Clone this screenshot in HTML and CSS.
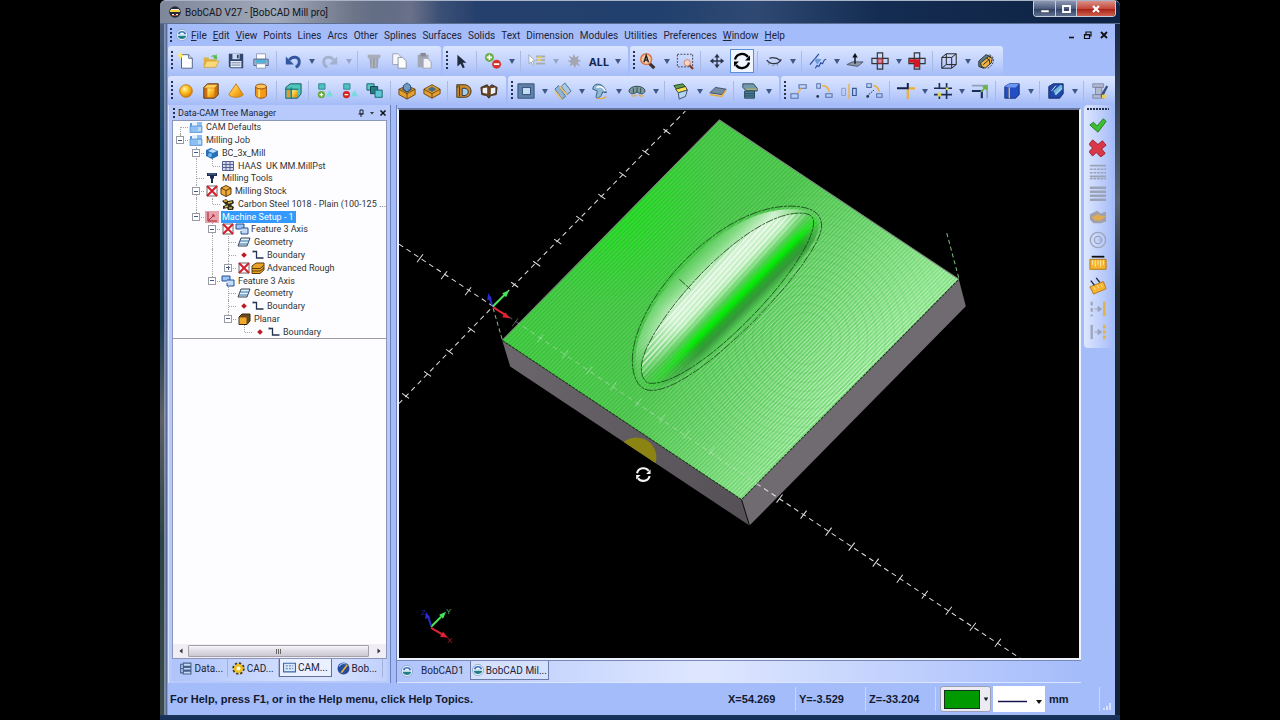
FILE: index.html
```html
<!DOCTYPE html>
<html lang="en">
<head>
    <meta charset="UTF-8">
    <meta name="viewport" content="width=device-width, initial-scale=1.0">
    <title>BobCAD V27 - [BobCAD Mill pro]</title>
    <link rel="stylesheet" href="styles.css">
</head>
<body>
    <!-- Shared icons -->
    <svg class="sprite" aria-hidden="true">
        <defs>
            <linearGradient id="gold" x1="0" y1="0" x2="1" y2="1">
                <stop offset="0" stop-color="#fff08a"/><stop offset="0.5" stop-color="#fdb92c"/><stop offset="1" stop-color="#d77d08"/>
            </linearGradient>
            <radialGradient id="ball" cx="0.4" cy="0.35" r="0.7">
                <stop offset="0" stop-color="#fff6a0"/><stop offset="0.5" stop-color="#fbb81f"/><stop offset="1" stop-color="#cf7604"/>
            </radialGradient>
        </defs>
        <symbol id="i-app" viewBox="0 0 14 14">
            <circle cx="7" cy="7" r="6.5" fill="#eef4ff" stroke="#8ba5c9"/>
            <path d="M2 6a5.200 5.200 0 0 1 10 0z" fill="#3b77c0"/>
            <path d="M2 8a5.200 5.200 0 0 0 10 0z" fill="#1f7f8a"/>
            <path d="M4.500 6a2.500 2 0 0 1 5 0z" fill="#fff"/>
        </symbol>
        <symbol id="i-folder" viewBox="0 0 14 12">
            <path d="M1 2h5l1 2h6v7H1z" fill="#5c9be0"/>
            <path d="M3 1h8v4H3z" fill="#e6f2ff"/>
            <path d="M8 1h5v4H8z" fill="#8cc0f3"/>
            <path d="M1 5h12v6.500H1z" fill="#8cc0f3" stroke="#4d8ad0" stroke-width=".7"/>
            <path d="M9 6h3v4H9z" fill="#b9dcfb"/>
        </symbol>
        <symbol id="i-cross" viewBox="0 0 12 12">
            <path d="M1 1h10v10H1z" fill="none" stroke="#444" stroke-width=".8"/>
            <path d="M1 1l10 10M11 1L1 11" stroke="#d41f2d" stroke-width="2"/>
        </symbol>
        <symbol id="i-feature" viewBox="0 0 14 12">
            <path d="M1 1h8v5H1z" fill="#9cc4f4" stroke="#234f96"/>
            <path d="M6 5h7v6H6V8" fill="#c5dcf9" stroke="#234f96"/>
        </symbol>
        <symbol id="i-geometry" viewBox="0 0 14 12">
            <path d="M4 2h9l-3 8H1z" fill="#e3effb" stroke="#345"/>
            <path d="M3 5h9M2 8h9" stroke="#3570a6"/>
        </symbol>
        <symbol id="i-diamond" viewBox="0 0 12 12"><path d="M6 3.200L8.800 6 6 8.800 3.200 6z" fill="#c01822"/></symbol>
        <symbol id="i-boundary" viewBox="0 0 12 12"><path d="M1 2.500h3.500v6.500h7" fill="none" stroke="#22324e" stroke-width="1.300"/><path d="M1 1.500v2" stroke="#357"/></symbol>
        <symbol id="i-drop" viewBox="0 0 8 8"><path d="M1 2h6L4 7z" fill="currentColor"/></symbol>
        <symbol id="i-rotate" viewBox="0 0 20 20">
            <path d="M3 8.500A7.300 7.300 0 0 1 16 6M17 11.500A7.300 7.300 0 0 1 4 14" fill="none" stroke="currentColor" stroke-width="2.300"/>
            <path d="M18 4.500v5h-5zM2 15.500v-5h5z" fill="currentColor"/>
        </symbol>
    </svg>

    <div class="window">
        <header class="titlebar">
            <svg class="title-icon" viewBox="0 0 12 12"><circle cx="6" cy="6" r="5.800" fill="#2b2b38"/><path d="M1 4h10v2H1z" fill="#f2d43c"/><path d="M2 3h8v1H2zM3 8h2v1H3zM7 8h2v1H7z" fill="#eee"/><path d="M3 9h6v1H3z" fill="#b54a35"/></svg>
            <h1 class="title">BobCAD V27 - [BobCAD Mill pro]</h1>
            <div class="window-controls">
                <button class="win-btn" aria-label="Minimize"><svg viewBox="0 0 12 10"><path d="M2 6h8v2.500H2z" fill="#fff" stroke="#445" stroke-width=".5"/></svg></button>
                <button class="win-btn small" aria-label="Maximize"><svg viewBox="0 0 12 10"><path d="M3 2h7v6H3z" fill="none" stroke="#fff" stroke-width="1.800"/></svg></button>
                <button class="win-btn close" aria-label="Close"><svg viewBox="0 0 12 10"><path d="M3 2l6 6M9 2L3 8" stroke="#fff" stroke-width="2.200"/></svg></button>
            </div>
        </header>

        <div class="client">
            <nav class="menubar">
                <span class="grip"></span>
                <svg class="menu-icon"><use href="#i-app"/></svg>
                <button><u>F</u>ile</button>
                <button><u>E</u>dit</button>
                <button><u>V</u>iew</button>
                <button>Points</button>
                <button>Lines</button>
                <button>Arcs</button>
                <button>Other</button>
                <button>Splines</button>
                <button>Surfaces</button>
                <button>Solids</button>
                <button>Text</button>
                <button>Dimension</button>
                <button>Modules</button>
                <button>Utilities</button>
                <button>Preferences</button>
                <button><u>W</u>indow</button>
                <button><u>H</u>elp</button>
                <div class="mdi-controls">
                    <button aria-label="Minimize document"><svg viewBox="0 0 10 10"><path d="M2 7.500h5" stroke="#111" stroke-width="1.600"/></svg></button>
                    <button aria-label="Restore document"><svg viewBox="0 0 10 10"><path d="M3 4V2h5v4H6.500M1.500 4.500h5v4h-5zM1.500 5h5" fill="none" stroke="#111" stroke-width="1.200"/></svg></button>
                    <button aria-label="Close document"><svg viewBox="0 0 10 10"><path d="M2 2l6 6M8 2L2 8" stroke="#111" stroke-width="1.800"/></svg></button>
                </div>
            </nav>

            <div class="toolbar-row">
                <div class="toolbar">
                    <span class="grip"></span>
                    <button class="tool" aria-label="New"><svg viewBox="0 0 20 20"><path d="M5 3h8l4 4v11H5z" fill="#fff" stroke="#4a5a80"/><path d="M13 3v4h4" fill="#dbe4f4" stroke="#4a5a80"/><path d="M4 0l1.300 2.700L8 4 5.300 5.300 4 8 2.700 5.300 0 4l2.700-1.300z" fill="#ffe95e"/></svg></button>
                    <button class="tool" aria-label="Open"><svg viewBox="0 0 20 20"><path d="M2 6h5l1 2h8v9H2z" fill="#e0b13c"/><path d="M5 10h14l-4 7H2z" fill="#fbd97a" stroke="#c39a34" stroke-width=".7"/><path d="M10 6c1-3 4-3 5-2l1-2 1 6-5-1 1.500-1.500c-1-1-2-.5-3.500.500z" fill="#53b94d"/></svg></button>
                    <button class="tool" aria-label="Save"><svg viewBox="0 0 20 20"><path d="M2 2h16v16H4l-2-2z" fill="#33466f"/><path d="M6 2h8v6H6z" fill="#cdd9ee"/><path d="M11 3h2v4h-2z" fill="#33466f"/><path d="M4 10h12v7H4z" fill="#e8eef8"/><path d="M5 12h10M5 14.500h10" stroke="#6a7da4"/></svg></button>
                    <button class="tool" aria-label="Print"><svg viewBox="0 0 20 20"><path d="M5 2h10v6H5z" fill="#fff" stroke="#8794b4"/><path d="M2 8h16v7H2z" fill="#a5b4d0" stroke="#4c5f8c"/><path d="M4 9h12v3H4z" fill="#46b5d8"/><path d="M5 13h10v5H5z" fill="#fff" stroke="#8794b4"/></svg></button>
                    <span class="sep"></span>
                    <button class="tool" aria-label="Undo"><svg viewBox="0 0 20 20"><path d="M6 9c3-5 11-4 11 2 0 3-2 5-4 6" fill="none" stroke="#32579c" stroke-width="3.200"/><path d="M2 5v9h9z" fill="#32579c"/></svg></button>
                    <button class="drop" aria-label="Undo list"><svg><use href="#i-drop"/></svg></button>
                    <button class="tool muted" aria-label="Redo"><svg viewBox="0 0 20 20"><path d="M14 9C11 4 3 5 3 11c0 3 2 5 4 6" fill="none" stroke="#9aa3b9" stroke-width="3.200"/><path d="M18 5v9H9z" fill="#9aa3b9"/></svg></button>
                    <button class="drop muted" aria-label="Redo list"><svg><use href="#i-drop"/></svg></button>
                    <span class="sep"></span>
                    <button class="tool" aria-label="Cut"><svg viewBox="0 0 20 20"><path d="M3 3h14v4H3z" fill="#a8adb9"/><path d="M5 7h10l-1 11H6z" fill="#9a9fac"/><path d="M8 8v9M12 8v9" stroke="#bec3cf"/></svg></button>
                    <button class="tool" aria-label="Copy"><svg viewBox="0 0 20 20"><path d="M3 2h6l3 3v9H3z" fill="#f4f6fb" stroke="#9a9fae"/><path d="M9 6h5l4 4v8H9z" fill="#fff" stroke="#8a90a0"/></svg></button>
                    <button class="tool" aria-label="Paste"><svg viewBox="0 0 20 20"><path d="M3 3h12v14H3z" fill="#a3a7b2"/><path d="M6 1h6v4H6z" fill="#858a97"/><path d="M9 7h5l4 4v7H9z" fill="#f2f3f8" stroke="#9a9fae"/></svg></button>
                </div>
                <div class="toolbar">
                    <span class="grip"></span>
                    <button class="tool" aria-label="Select"><svg viewBox="0 0 20 20"><path d="M6 3v13l3.500-3 2.500 5 2.200-1-2.400-5H16z" fill="#1f2a3c"/></svg></button>
                    <span class="sep"></span>
                    <button class="tool" aria-label="Add or remove"><svg viewBox="0 0 20 20"><circle cx="6" cy="6" r="5" fill="#69ad45"/><path d="M6 3v6M3 6h6" stroke="#fff" stroke-width="1.800"/><circle cx="14" cy="13.500" r="5" fill="#d5332c"/><path d="M11 13.500h6" stroke="#fff" stroke-width="2"/></svg></button>
                    <button class="drop" aria-label="Add or remove options"><svg><use href="#i-drop"/></svg></button>
                    <span class="sep"></span>
                    <button class="tool" aria-label="Selection filter"><svg viewBox="0 0 20 20"><path d="M1 3v10l2.500-2 2 4 1.500-1-2-4h3z" fill="#fff" stroke="#9aa"/><path d="M9 5h10M9 9h10M9 13h10" stroke="#a8aaa9" stroke-width="2"/><path d="M10 9h5M11 6h4" stroke="#e6d256" stroke-width="2"/></svg></button>
                    <button class="drop muted" aria-label="Selection filter options"><svg><use href="#i-drop"/></svg></button>
                    <button class="tool" aria-label="Deselect"><svg viewBox="0 0 20 20"><path d="M10 2l1.500 4 4-2-1.500 4 4 2-4 1.500 3 4.500-4.500-2L11 18l-2-4-4 2 1.500-4L3 10l4-1.500L4 4l4.500 2z" fill="#a4a6b2"/></svg></button>
                    <button class="tool all">ALL</button>
                    <button class="drop" aria-label="Select all options"><svg><use href="#i-drop"/></svg></button>
                </div>
                <div class="toolbar">
                    <span class="grip"></span>
                    <button class="tool" aria-label="Zoom all"><svg viewBox="0 0 20 20"><path d="M11 12l6 6" stroke="#3a3030" stroke-width="3.500"/><circle cx="8" cy="8" r="6" fill="#f2c9a4" stroke="#dc7340" stroke-width="1.600"/><path d="M5.500 11.500L8 4l2.500 7.500M6.300 9h3.400" fill="none" stroke="#222" stroke-width="1.600"/></svg></button>
                    <button class="drop" aria-label="Zoom options"><svg><use href="#i-drop"/></svg></button>
                    <button class="tool" aria-label="Zoom window"><svg viewBox="0 0 20 20"><path d="M1.500 2.500h17v14h-17z" fill="none" stroke="#333" stroke-dasharray="2 1.500"/><path d="M14 14l5 5" stroke="#7d3f2c" stroke-width="2.400"/><circle cx="12.500" cy="12" r="3.500" fill="#f2d8cc" stroke="#d97d58"/></svg></button>
                    <span class="sep"></span>
                    <button class="tool" aria-label="Pan"><svg viewBox="0 0 20 20"><path d="M10 4v12M4 10h12" stroke="#2b3348" stroke-width="1.500"/><path d="M10 2l3 4H7zM10 18l3-4H7zM2 10l4-3v6zM18 10l-4-3v6z" fill="#2b3348"/></svg></button>
                    <button class="tool active" aria-label="Rotate view"><svg><use href="#i-rotate"/></svg></button>
                    <span class="sep"></span>
                    <button class="tool" aria-label="Hide"><svg viewBox="0 0 20 20"><path d="M2 9c5 6 13 5 16-1M5 7c5-2 9 0 13 3" fill="none" stroke="#30343e" stroke-width="1.400"/><path d="M5 12l-1 2M9 14v2M13 13l1 2" stroke="#777"/></svg></button>
                    <button class="drop" aria-label="Hide options"><svg><use href="#i-drop"/></svg></button>
                    <span class="sep"></span>
                    <button class="tool" aria-label="Splines"><svg viewBox="0 0 20 20"><path d="M1 14L11 2M7 18l2-3 2 1 2-4 2 1 2-4 2-1" fill="none" stroke="#26499d" stroke-width="1.300"/><path d="M5 7l9 1-5 6z" fill="#6f9ad8"/></svg></button>
                    <button class="drop" aria-label="Spline options"><svg><use href="#i-drop"/></svg></button>
                    <button class="tool" aria-label="Normal to plane"><svg viewBox="0 0 20 20"><path d="M1 14l6-3h12l-6 5z" fill="#8d97aa" stroke="#49536a"/><path d="M10 13V5" stroke="#111" stroke-width="1.600"/><path d="M10 1l3 5H7z" fill="#111"/></svg></button>
                    <button class="tool" aria-label="View faces"><svg viewBox="0 0 20 20"><path d="M7 1h6v18H7zM1 7h18v6H1z" fill="none" stroke="#333" stroke-width="1.300"/><path d="M7.500 7.500h5v5h-5z" fill="#d98a92" stroke="#a3202f"/></svg></button>
                    <button class="drop" aria-label="View face options"><svg><use href="#i-drop"/></svg></button>
                    <button class="tool" aria-label="View bottom"><svg viewBox="0 0 20 20"><path d="M7 1h6v18H7zM1 7h18v6H1z" fill="none" stroke="#333" stroke-width="1.300"/><path d="M1 8h12v4H1zM7 12h6v5H7z" fill="#d71623"/></svg></button>
                    <span class="sep"></span>
                    <button class="tool" aria-label="Wireframe"><svg viewBox="0 0 20 20"><path d="M2 6h11v12H2zM7 2h11v12H7zM2 6l5-4M13 6l5-4M13 18l5-4M2 18l5-4" fill="none" stroke="#222" stroke-width="1.100"/></svg></button>
                    <button class="drop" aria-label="Shading options"><svg><use href="#i-drop"/></svg></button>
                    <button class="tool" aria-label="Section view"><svg viewBox="0 0 20 20"><path d="M2 10l8-7 5 2v6l-8 7-5-2z" fill="#5e8090" stroke="#222"/><path d="M4 12l9-7 4 2-1 5-7 6-4-2z" fill="#f0b343" stroke="#222"/><path d="M7 14l7-6M11 7l3 2v4" fill="none" stroke="#222"/><path d="M14 3c6 2 6 11-2 15" fill="none" stroke="#333" stroke-dasharray="2 1.500"/></svg></button>
                </div>
            </div>

            <div class="toolbar-row second">
                <div class="toolbar">
                    <span class="grip"></span>
                    <button class="tool" aria-label="Sphere"><svg viewBox="0 0 20 20"><circle cx="10" cy="10" r="7" fill="url(#ball)" stroke="#c4780d"/></svg></button>
                    <button class="tool" aria-label="Box"><svg viewBox="0 0 20 20"><path d="M2 6l4-4h12v12l-4 4H2z" fill="#c77113" stroke="#55330c"/><path d="M2.500 6.500L6 3h11l-3 3.500z" fill="#ffcf5c"/><path d="M6 7h8v10H6z" fill="url(#gold)"/></svg></button>
                    <button class="tool" aria-label="Cone"><svg viewBox="0 0 20 20"><path d="M10 2l8 12c-2 4-14 4-16 0z" fill="url(#gold)" stroke="#c4780d"/></svg></button>
                    <button class="tool" aria-label="Cylinder"><svg viewBox="0 0 20 20"><path d="M4 5v10c1 4 11 4 12 0V5z" fill="#f49a16" stroke="#8c4a07"/><path d="M8 8v9" stroke="#ffe080" stroke-width="2"/><ellipse cx="10" cy="5" rx="6" ry="2.700" fill="#ffc35d" stroke="#8c4a07"/></svg></button>
                    <span class="sep"></span>
                    <button class="tool" aria-label="Shell"><svg viewBox="0 0 20 20"><path d="M2 6l5-4h12v11l-4 5H2z" fill="#4cc6bd" stroke="#174d50"/><path d="M3 9h4v8H3z" fill="#e79a2a"/><path d="M9 9h6v8H9z" fill="url(#gold)"/><path d="M8 6v12M2 8h14" stroke="#1b5e60"/></svg></button>
                    <span class="sep"></span>
                    <button class="tool" aria-label="Boolean add"><svg viewBox="0 0 20 20"><path d="M3 2h7v6H3z" fill="#4fc1c2" stroke="#2d8186"/><path d="M15 9l4 7h-8z" fill="#77dadb"/><circle cx="6" cy="14" r="4" fill="#69a93d"/><path d="M6 12v4M4 14h4" stroke="#fff" stroke-width="1.200"/></svg></button>
                    <button class="tool" aria-label="Boolean subtract"><svg viewBox="0 0 20 20"><path d="M3 2h7v6H3z" fill="#4fc1c2" stroke="#2d8186"/><path d="M15 9l4 7h-8z" fill="#77dadb"/><circle cx="6" cy="14" r="4" fill="#d2231e"/><path d="M4 14h4" stroke="#fff" stroke-width="1.500"/></svg></button>
                    <button class="tool" aria-label="Intersect"><svg viewBox="0 0 20 20"><path d="M1 2h8v7H1z" fill="#5bc7c6" stroke="#155d66"/><path d="M5 5h8v8H5z" fill="#267b83" stroke="#103f4b"/><path d="M10 9h8v8h-8z" fill="#5bc7d6" stroke="#155d66"/></svg></button>
                    <span class="sep"></span>
                    <button class="tool" aria-label="Pocket"><svg viewBox="0 0 20 20"><path d="M1 8l9-4 9 4v6l-9 5-9-5z" fill="#e3a02e" stroke="#694110"/><path d="M1 8l9 5 9-5M10 13v6" fill="none" stroke="#694110"/><path d="M4 8l6-4 6 4-6 4z" fill="#35526c"/><path d="M6 4l4-3 4 3v4l-4 3-4-3z" fill="#6f9ac3" stroke="#274a6c"/></svg></button>
                    <button class="tool" aria-label="Boss"><svg viewBox="0 0 20 20"><path d="M1 8l9-5 9 5v5l-9 5-9-5z" fill="#e3a02e" stroke="#694110"/><path d="M1 8l9 5 9-5M10 13v5" fill="none" stroke="#694110"/><path d="M5 8l5-3 5 3-5 3z" fill="#486b85"/></svg></button>
                    <span class="sep"></span>
                    <button class="tool" aria-label="Fillet solid"><svg viewBox="0 0 20 20"><path d="M2 3h9c9 1 9 13 1 14H2z" fill="#c98a2b" stroke="#39321f"/><path d="M5 5v11M2 6l3-2" stroke="#39321f"/><path d="M8 7h3c5 1 5 7 0 8H8z" fill="#a5cbe9" stroke="#263240"/></svg></button>
                    <button class="tool" aria-label="Split solid"><svg viewBox="0 0 20 20"><path d="M1 6l7-3 2 3 3-3 6 3-1 8-6 1-2 3-3-3-5-1z" fill="#6b4420" stroke="#2e251b"/><path d="M3 7l5-1v7l-5-1zM12 7l5-1v6l-5 2z" fill="#eef2fa"/></svg></button>
                </div>
                <div class="toolbar">
                    <span class="grip"></span>
                    <button class="tool" aria-label="Planar surface"><svg viewBox="0 0 20 20"><path d="M1 2h18v16H1z" fill="#5f83ad" stroke="#2f4a6e"/><path d="M6 6h9v8H6z" fill="#c5dcf5" stroke="#284468"/></svg></button>
                    <button class="drop" aria-label="Planar options"><svg><use href="#i-drop"/></svg></button>
                    <button class="tool" aria-label="Ruled surface"><svg viewBox="0 0 20 20"><path d="M1 8l4-4 8 12-4 3z" fill="#8fb4d4" stroke="#486c8a"/><path d="M8 5l4-4 7 9-4 4z" fill="#a9c8e2" stroke="#486c8a"/><path d="M1 10l7 9M6 5l8 9" stroke="#efc063" stroke-width="1.800"/></svg></button>
                    <button class="drop" aria-label="Ruled options"><svg><use href="#i-drop"/></svg></button>
                    <button class="tool" aria-label="Revolve surface"><svg viewBox="0 0 20 20"><path d="M2 8c0-8 13-8 15 4l-4-1c-1 3-2 6-6 7-3 0 0-6 0-8z" fill="#8eb9d7" stroke="#2c5574"/><path d="M6 6c5-2 8 0 10 4" fill="none" stroke="#fff" stroke-width="1.500"/><path d="M7 18c3 1 8 0 10-2" stroke="#e8ab3c" stroke-width="1.500" fill="none"/></svg></button>
                    <button class="drop" aria-label="Revolve options"><svg><use href="#i-drop"/></svg></button>
                    <button class="tool" aria-label="Loft surface"><svg viewBox="0 0 20 20"><path d="M1 10c1-7 17-7 18 0-2 5-6 3-9 1-3 2-7 4-9-1z" fill="#7b9b9c" stroke="#27434b"/><path d="M6 7v5M10 6v5M14 7v5" stroke="#2c4650"/><path d="M4 15c2 1 4 1 5-1M12 14c1 2 4 2 5 1" fill="none" stroke="#e8ab3c" stroke-width="1.500"/></svg></button>
                    <button class="drop" aria-label="Loft options"><svg><use href="#i-drop"/></svg></button>
                    <span class="sep"></span>
                    <button class="tool" aria-label="Trim surface"><svg viewBox="0 0 20 20"><path d="M2 4l10-2 3 3-10 3z" fill="#57a050" stroke="#28412a"/><path d="M4 8l11-3 2 4-10 3z" fill="#fae24d" stroke="#3c3a20"/><path d="M7 12l10-3-2 7-7 3z" fill="#b8d6f0" stroke="#324b66"/></svg></button>
                    <button class="drop" aria-label="Trim options"><svg><use href="#i-drop"/></svg></button>
                    <button class="tool" aria-label="Flat surface"><svg viewBox="0 0 20 20"><path d="M1 12l6-6 12 2-5 6z" fill="#738aa1" stroke="#394b5c"/><path d="M1 14l13 2 5-7" fill="none" stroke="#eca930" stroke-width="1.600"/></svg></button>
                    <span class="sep"></span>
                    <button class="tool" aria-label="Extend surface"><svg viewBox="0 0 20 20"><path d="M2 2h12l4 5v3H6L2 6z" fill="#7399aa" stroke="#264754"/><path d="M4 10h11v8H4z" fill="#4b7d9c" stroke="#264754"/><path d="M4 13h11M4 15.500h11" stroke="#264754"/><path d="M6 8h12" stroke="#d6b94b"/></svg></button>
                    <button class="drop" aria-label="Extend options"><svg><use href="#i-drop"/></svg></button>
                </div>
                <div class="toolbar">
                    <span class="grip"></span>
                    <button class="tool" aria-label="Translate"><svg viewBox="0 0 20 20"><path d="M10 3h8v4h-8zM1 13h8v5H1z" fill="none" stroke="#5673a8" stroke-width="1.200"/><path d="M9 12c1-3 3-3 3-5" fill="none" stroke="#eab044" stroke-width="1.500"/></svg></button>
                    <button class="tool" aria-label="Rotate copy"><svg viewBox="0 0 20 20"><path d="M2 2h4v5H2zM12 13h7v4h-7z" fill="none" stroke="#5673a8" stroke-width="1.200"/><circle cx="3" cy="16" r="1.500" fill="#234"/><path d="M8 4c5 0 7 3 8 7" fill="none" stroke="#eab044" stroke-width="1.800"/></svg></button>
                    <button class="tool" aria-label="Mirror"><svg viewBox="0 0 20 20"><path d="M2 7h4v8H2z" fill="none" stroke="#8297bf"/><path d="M14 7h4v8h-4z" fill="none" stroke="#35568f" stroke-width="1.300"/><path d="M10 2v17" stroke="#efb04a" stroke-width="1.600"/></svg></button>
                    <button class="tool" aria-label="Scale"><svg viewBox="0 0 20 20"><path d="M2 2h5v4H2zM13 13h6v4h-6z" fill="none" stroke="#5673a8" stroke-width="1.200"/><circle cx="3" cy="16" r="1.500" fill="#234"/><path d="M4 14l6-5" stroke="#234" stroke-dasharray="2 1"/><path d="M9 4c4 0 6 3 7 7" fill="none" stroke="#eab044" stroke-width="1.800"/></svg></button>
                    <span class="sep"></span>
                    <button class="tool" aria-label="Trim lines"><svg viewBox="0 0 20 20"><path d="M12 8v11M12 7h8" stroke="#f0ad2e" stroke-width="2.400"/><path d="M0 7h12V1" fill="none" stroke="#13224b" stroke-width="2.200"/></svg></button>
                    <button class="drop" aria-label="Trim line options"><svg><use href="#i-drop"/></svg></button>
                    <button class="tool" aria-label="Break lines"><svg viewBox="0 0 20 20"><path d="M0 7h20M0 14h20M6 1v6M14 1v6M6 14v5M14 7v12" stroke="#1c2e53" stroke-width="1.800"/><path d="M4 12h4v4H4zM13 6h3v3h-3z" fill="#d8cf55"/></svg></button>
                    <button class="drop" aria-label="Break options"><svg><use href="#i-drop"/></svg></button>
                    <button class="tool" aria-label="Offset"><svg viewBox="0 0 20 20"><path d="M1 4h17v14" fill="none" stroke="#8fa1ba" stroke-width="1.800"/><path d="M1 10h11v8" fill="none" stroke="#1a2e5a" stroke-width="2.400"/><path d="M11 11l4-4" stroke="#69b34a" stroke-width="2"/><path d="M18 3v7l-6-5z" fill="#69b34a"/></svg></button>
                    <span class="sep"></span>
                    <button class="tool" aria-label="Extrude"><svg viewBox="0 0 20 20"><path d="M2 5l5-3h11v12l-4 4H2z" fill="#244fc4" stroke="#122c75"/><path d="M2 5l5-3h11l-4 4H7z" fill="#6c96f2"/><path d="M7 6v12" stroke="#f2b743" stroke-width="1.500"/></svg></button>
                    <button class="drop" aria-label="Extrude options"><svg><use href="#i-drop"/></svg></button>
                    <span class="sep"></span>
                    <button class="tool" aria-label="Cut solid"><svg viewBox="0 0 20 20"><path d="M2 5l5-3h11v11l-4 5H2z" fill="#1f46a8" stroke="#10265e"/><path d="M7 10l8-7 2 1v4l-7 7z" fill="#6fb6da"/><path d="M5 10l5-6M9 14l7-7" stroke="#d6ebf5"/></svg></button>
                    <button class="drop" aria-label="Cut options"><svg><use href="#i-drop"/></svg></button>
                    <span class="sep"></span>
                    <button class="tool" aria-label="Tool pattern"><svg viewBox="0 0 20 20"><path d="M2 2h12v4H2zM5 6h7v8H5zM2 14h12v4H2z" fill="#b3bad0" stroke="#7d86a6"/><path d="M17 4l2 1-5 10-3 3v-4z" fill="#39507e"/><path d="M12 14h5v4h-5z" fill="#eed04d"/></svg></button>
                </div>
            </div>

            <main class="workspace">
                <aside class="manager">
                    <div class="manager-head">
                        <span class="grip"></span>
                        <h2>Data-CAM Tree Manager</h2>
                        <button aria-label="Pin"><svg viewBox="0 0 8 8"><path d="M3 1h3v4H3zM1.500 5h5M4 5v3" fill="none" stroke="#223"/></svg></button>
                        <button aria-label="Panel menu"><svg viewBox="0 0 8 8"><path d="M2 3h4L4 5.500z" fill="#334"/></svg></button>
                        <button aria-label="Close panel"><svg viewBox="0 0 8 8"><path d="M1.500 1.500l5 5M6.500 1.500l-5 5" stroke="#111" stroke-width="1.500"/></svg></button>
                    </div>
                    <div class="tree-pane">
                        <ul class="tree">
                            <li><i class="guide first"></i><svg class="ico"><use href="#i-folder"/></svg><span>CAM Defaults</span></li>
                            <li><i class="guide last"><button class="expander" aria-label="Collapse"></button></i><svg class="ico"><use href="#i-folder"/></svg><span>Milling Job</span></li>
                            <li><i class="guide"></i><i class="guide tee"><button class="expander" aria-label="Collapse"></button></i><svg class="ico" viewBox="0 0 14 12"><path d="M1 3l5-2 7 3v5l-6 3-6-3z" fill="#2672ba"/><path d="M3 4l4-2 5 2-4 2z" fill="#bfe0fa"/><circle cx="5" cy="8" r="2" fill="#6fb4e9"/></svg><span>BC_3x_Mill</span></li>
                            <li><i class="guide"></i><i class="guide line"></i><i class="guide last"></i><svg class="ico" viewBox="0 0 14 12"><path d="M1.500 1.500h11v9h-11z" fill="#d6daf0" stroke="#565f8e"/><path d="M1 4.500h12M1 7.500h12M5 1v10M9 1v10" stroke="#565f8e"/></svg><span>HAAS&nbsp; UK MM.MillPst</span></li>
                            <li><i class="guide"></i><i class="guide tee"></i><svg class="ico" viewBox="0 0 14 12"><path d="M2 1h10v3H9v2l-1 1v4H6V7L5 6V4H2z" fill="#1c2b48"/><path d="M3 2h8" stroke="#5c7ab0"/></svg><span>Milling Tools</span></li>
                            <li><i class="guide"></i><i class="guide tee"><button class="expander" aria-label="Collapse"></button></i><svg class="ico"><use href="#i-cross"/></svg><svg class="ico near" viewBox="0 0 14 12"><path d="M7 .5l5 2.500v6L7 11.500 2 9V3z" fill="#f1ab38" stroke="#5b3b12"/><path d="M2 3l5 2.500L12 3M7 5.500v6" fill="none" stroke="#5b3b12"/></svg><span>Milling Stock</span></li>
                            <li><i class="guide"></i><i class="guide line"></i><i class="guide last"></i><svg class="ico" viewBox="0 0 14 12"><path d="M1 3l4-2 2 2 5-1 1 3-3 2 3 2-1 3H7l-1-2-4 1V8l3-1z" fill="#312d1e"/><path d="M3 3l3 0M7 5l4-1M4 9l3-1M8 10h3" stroke="#dcb741" stroke-width="1.500"/></svg><span>Carbon Steel 1018 - Plain (100-125 ...</span></li>
                            <li><i class="guide"></i><i class="guide last"><button class="expander" aria-label="Collapse"></button></i><svg class="ico" viewBox="0 0 14 12"><path d="M0 0h14v12H0z" fill="#e7a3ac"/><path d="M3 1v9h9M4 9l5-5M9 6V4H7" fill="none" stroke="#a3202f"/></svg><span class="selected">Machine Setup - 1</span></li>
                            <li><i class="guide"></i><i class="guide"></i><i class="guide tee"><button class="expander" aria-label="Collapse"></button></i><svg class="ico"><use href="#i-cross"/></svg><svg class="ico near"><use href="#i-feature"/></svg><span>Feature 3 Axis</span></li>
                            <li><i class="guide"></i><i class="guide"></i><i class="guide line"></i><i class="guide tee"></i><svg class="ico"><use href="#i-geometry"/></svg><span>Geometry</span></li>
                            <li><i class="guide"></i><i class="guide"></i><i class="guide line"></i><i class="guide tee"></i><svg class="ico"><use href="#i-diamond"/></svg><svg class="ico near"><use href="#i-boundary"/></svg><span>Boundary</span></li>
                            <li><i class="guide"></i><i class="guide"></i><i class="guide line"></i><i class="guide last"><button class="expander closed" aria-label="Expand"></button></i><svg class="ico"><use href="#i-cross"/></svg><svg class="ico near" viewBox="0 0 14 12"><path d="M1 4l4-3h8v7l-4 3.500H1z" fill="#e8a326" stroke="#5e3d0c"/><path d="M1 6.500h8l4-3M1 9h8l4-3" fill="none" stroke="#5e3d0c"/></svg><span>Advanced Rough</span></li>
                            <li><i class="guide"></i><i class="guide"></i><i class="guide last"><button class="expander" aria-label="Collapse"></button></i><svg class="ico"><use href="#i-feature"/></svg><span>Feature 3 Axis</span></li>
                            <li><i class="guide"></i><i class="guide"></i><i class="guide"></i><i class="guide tee"></i><svg class="ico"><use href="#i-geometry"/></svg><span>Geometry</span></li>
                            <li><i class="guide"></i><i class="guide"></i><i class="guide"></i><i class="guide tee"></i><svg class="ico"><use href="#i-diamond"/></svg><svg class="ico near"><use href="#i-boundary"/></svg><span>Boundary</span></li>
                            <li><i class="guide"></i><i class="guide"></i><i class="guide"></i><i class="guide last"><button class="expander" aria-label="Collapse"></button></i><svg class="ico" viewBox="0 0 14 12"><path d="M2 4l3-3h8v7l-3 3.500H2z" fill="#6d4a1b" stroke="#3a290f"/><path d="M2.500 4.500h7v6.500h-7z" fill="#f0a92c"/></svg><span>Planar</span></li>
                            <li><i class="guide"></i><i class="guide"></i><i class="guide"></i><i class="guide"></i><i class="guide last"></i><svg class="ico"><use href="#i-diamond"/></svg><svg class="ico near"><use href="#i-boundary"/></svg><span>Boundary</span></li>
                        </ul>
                        <div class="scrollbar">
                            <button aria-label="Scroll left"><svg viewBox="0 0 8 8"><path d="M5.500 1.500v5L2.500 4z" fill="#333"/></svg></button>
                            <div class="thumb"><i></i><i></i><i></i></div>
                            <button aria-label="Scroll right"><svg viewBox="0 0 8 8"><path d="M2.500 1.500v5l3-2.500z" fill="#333"/></svg></button>
                        </div>
                    </div>
                    <div class="manager-tabs">
                        <button><svg viewBox="0 0 12 12"><path d="M4 1h7v3H4zM4 5h7v2.500H4zM4 8.500h7V11H4zM1 2h3M1 6h3M1 10h3M1.500 2v8" fill="#c9d9f2" stroke="#47628c"/></svg>Data...</button>
                        <button><svg viewBox="0 0 12 12"><circle cx="6" cy="6" r="4.500" fill="none" stroke="#4a3c12" stroke-width="2.500" stroke-dasharray="2 1.500"/><circle cx="6" cy="6" r="3" fill="#fff" stroke="#efc01f" stroke-width="2.500"/></svg>CAD...</button>
                        <button class="current"><svg viewBox="0 0 12 12"><path d="M.5 2h11v8H.5z" fill="#dce9fb" stroke="#356aa8"/><path d="M2.500 4.500h7M2.500 7h7" stroke="#6d93c1" stroke-dasharray="2 1"/></svg>CAM...</button>
                        <button><svg viewBox="0 0 12 12"><circle cx="6" cy="6" r="5.500" fill="#234a9b"/><path d="M3 10l6-8 1 1-5 7z" fill="#f0b23c"/><path d="M2 4c2-3 5-3 6-2" stroke="#8fb5ef" fill="none"/></svg>Bob...</button>
                    </div>
                </aside>

                <section class="document">
                    <div class="viewport">
                        <svg class="scene" viewBox="400 110 679 548" preserveAspectRatio="xMinYMin slice" role="img" aria-label="Toolpath on stock">
                            <defs>
                                <linearGradient id="face" gradientUnits="userSpaceOnUse" x1="600" y1="220" x2="850" y2="400">
                                    <stop offset="0" stop-color="#3cc83c"/><stop offset=".45" stop-color="#4bc64b"/><stop offset=".7" stop-color="#67d367"/><stop offset="1" stop-color="#90e890"/>
                                </linearGradient>
                                <linearGradient id="groove" gradientUnits="userSpaceOnUse" x1="660" y1="290" x2="717" y2="347">
                                    <stop offset="0" stop-color="#58ca58"/><stop offset=".14" stop-color="#80da80"/><stop offset=".34" stop-color="#d2f2d2"/><stop offset=".5" stop-color="#bdeebd"/><stop offset=".66" stop-color="#55cf55"/><stop offset=".76" stop-color="#00ee00"/><stop offset=".82" stop-color="#22b022"/><stop offset=".9" stop-color="#36963a"/><stop offset="1" stop-color="#58cc58"/>
                                </linearGradient>
                                <linearGradient id="across" gradientUnits="userSpaceOnUse" x1="660" y1="290" x2="717" y2="347">
                                    <stop offset=".1" stop-color="#000"/><stop offset=".3" stop-color="#fff"/><stop offset=".5" stop-color="#fff"/><stop offset=".66" stop-color="#000"/>
                                </linearGradient>
                                <linearGradient id="along" gradientUnits="userSpaceOnUse" x1="645" y1="375" x2="820" y2="210">
                                    <stop offset="0" stop-color="#222"/><stop offset=".25" stop-color="#fff"/><stop offset=".85" stop-color="#fff"/><stop offset="1" stop-color="#222"/>
                                </linearGradient>
                                <linearGradient id="side" gradientUnits="userSpaceOnUse" x1="503" y1="350" x2="745" y2="510">
                                    <stop offset="0" stop-color="#6a666b"/><stop offset="1" stop-color="#555156"/>
                                </linearGradient>
                                <radialGradient id="corner" gradientUnits="userSpaceOnUse" cx="850" cy="390" r="220">
                                    <stop offset="0" stop-color="#fff" stop-opacity=".85"/><stop offset="1" stop-color="#fff" stop-opacity=".2"/>
                                </radialGradient>
                                <radialGradient id="bright" gradientUnits="userSpaceOnUse" cx="625" cy="210" r="100">
                                    <stop offset="0" stop-color="#00e800" stop-opacity=".4"/><stop offset="1" stop-color="#00e800" stop-opacity="0"/>
                                </radialGradient>
                                <radialGradient id="rings" gradientUnits="userSpaceOnUse" cx="806" cy="338" r="9" spreadMethod="repeat">
                                    <stop offset="0" stop-color="#127a12" stop-opacity="0"/><stop offset=".7" stop-color="#127a12" stop-opacity="0"/><stop offset=".9" stop-color="#127a12" stop-opacity=".08"/><stop offset="1" stop-color="#127a12" stop-opacity="0"/>
                                </radialGradient>
                                <radialGradient id="rings-light" gradientUnits="userSpaceOnUse" cx="675" cy="245" r="6" spreadMethod="repeat">
                                    <stop offset="0" stop-color="#0f0" stop-opacity="0"/><stop offset=".6" stop-color="#0f0" stop-opacity="0"/><stop offset=".9" stop-color="#0f0" stop-opacity=".4"/>
                                </radialGradient>
                                <radialGradient id="fade-r" gradientUnits="userSpaceOnUse" cx="806" cy="338" r="170">
                                    <stop offset="0" stop-color="#000"/><stop offset=".15" stop-color="#fff"/><stop offset=".6" stop-color="#bbb"/><stop offset="1" stop-color="#000"/>
                                </radialGradient>
                                <radialGradient id="fade-l" gradientUnits="userSpaceOnUse" cx="620" cy="215" r="85">
                                    <stop offset="0" stop-color="#fff"/><stop offset="1" stop-color="#000"/>
                                </radialGradient>
                                <pattern id="passes" width="3" height="3" patternUnits="userSpaceOnUse" patternTransform="rotate(-45)">
                                    <path d="M0 1h3" stroke="#fff" stroke-width="1"/>
                                </pattern>
                                <pattern id="passes-dark" width="3" height="3" patternUnits="userSpaceOnUse" patternTransform="rotate(-45)">
                                    <path d="M0 2.500h3" stroke="#147814" stroke-width="1"/>
                                </pattern>
                                <pattern id="groove-passes" width="4" height="4" patternUnits="userSpaceOnUse" patternTransform="rotate(-48)">
                                    <path d="M0 2h4" stroke="#fff" stroke-width="1.500"/>
                                </pattern>
                                <mask id="mask-r"><path d="M400 110h679v548H400z" fill="url(#fade-r)"/></mask>
                                <mask id="mask-l"><path d="M400 110h679v548H400z" fill="url(#fade-l)"/></mask>
                                <mask id="mask-c"><path d="M400 110h679v548H400z" fill="url(#corner)"/></mask>
                                <mask id="mask-across"><path d="M400 110h679v548H400z" fill="url(#across)"/></mask>
                                <mask id="mask-along"><path d="M400 110h679v548H400z" fill="url(#along)"/></mask>
                                <clipPath id="front"><path d="M503 340l239 159 8 26-239-159z"/></clipPath>
                            </defs>

                            <!-- Stock block -->
                            <path d="M503 340l239 159 8 26-239-159z" fill="url(#side)"/>
                            <path d="M742 499l217-220 7 27-216 219z" fill="#6f6b70"/>
                            <circle cx="637" cy="457" r="20" fill="#8b8412" clip-path="url(#front)"/>
                            <path d="M742 499l8 26" stroke="#111"/>
                            <path d="M720 120l239 159-217 220-239-159z" fill="url(#face)"/>
                            <path d="M720 120l239 159-217 220-239-159z" fill="url(#bright)"/>
                            <path d="M720 120l239 159-217 220-239-159z" fill="url(#passes-dark)" opacity=".1"/>
                            <path d="M720 120l239 159-217 220-239-159z" fill="url(#passes)" mask="url(#mask-c)" opacity=".6"/>
                            <path d="M720 120l239 159-217 220-239-159z" fill="url(#rings)" mask="url(#mask-r)"/>
                            <path d="M720 120l239 159-217 220-239-159z" fill="url(#rings-light)" mask="url(#mask-l)"/>
                            <path d="M503 340l217-220 239 159" fill="none" stroke="#7d8a7d"/>
                            <path d="M503 340l239 159 217-220" fill="none" stroke="#1b351b" stroke-dasharray="3 1"/>

                            <!-- Groove -->
                            <path d="M636 360C636 304 721 209 790 209c23 0 29 7 29 17 0 30-120 161-167 161-12 0-16-14-16-27z" fill="url(#groove)" mask="url(#mask-along)"/>
                            <path d="M642 367C642 330 742 213 800 213c10 0 14 3 14 9 0 40-114 161-162 161-7 0-10-7-10-16z" fill="url(#groove-passes)" mask="url(#mask-across)" opacity=".75"/>
                            <g fill="none" stroke="#173f17" stroke-width=".8" stroke-dasharray="8 1 3 1">
                                <path d="M633 360C633 300 720 206 790 206c25 0 32 9 32 20 0 32-122 164-170 164-14 0-19-15-19-30z"/>
                                <path d="M642 367C642 330 742 213 800 213c10 0 14 3 14 9 0 40-114 161-162 161-7 0-10-7-10-16z"/>
                                <path d="M680 279l11 10"/>
                            </g>

                            <!-- World axes -->
                            <g fill="none" stroke="#e2e2e2" stroke-dasharray="5 4">
                                <path d="M400 244l94 62-94 97M494 306l192-195M757 483l264 175"/>
                                <path d="M494 306l263 177" opacity=".4"/>
                            </g>
                            <path d="M418 262l6-8M442 279l6-8M466 295l6-8M777 502l6-8M801 518l6-8M826 535l6-8M849 550l6-8M873 566l6-8M897 582l6-8M922 598l6-8M946 614l6-8M970 630l6-8M995 646l6-8M512 282l7 5M534 261l7 5M555 239l7 5M577 216l7 5M599 194l7 5M620 172l7 5M643 150l7 5M664 129l7 5M469 327l7 5M447 349l7 5M425 371l7 5M403 393l7 5" stroke="#e2e2e2"/>
                            <path d="M513 326l6-8M538 342l6-8M563 358l6-8M587 374l6-8M611 390l6-8M636 406l6-8M660 422l6-8M684 438l6-8M709 454l6-8" stroke="#fff" opacity=".3"/>
                            <path d="M494 308l9 31M947 233l12 45" fill="none" stroke="#7dbd7d" stroke-dasharray="4 3"/>

                            <!-- Origin and view triads -->
                            <g fill="none" stroke-width="2">
                                <path d="M494 306l12-12M432 626l10-10" stroke="#45e45a"/>
                                <path d="M494 307l13 8M432 627l12 7" stroke="#e02333"/>
                                <path d="M493 305l-3-9M432 625l-3-10" stroke="#2b2bd0"/>
                            </g>
                            <path d="M510 290l-3 7-4-4zM447 611l-3 7-4-4z" fill="#45e45a"/>
                            <path d="M511 318l-8-1 3-5zM449 637l-8-1 3-5z" fill="#e02333"/>
                            <path d="M489 293l4 6-5 1zM427 611l4 6-5 1z" fill="#2b2bd0"/>
                            <g class="axis-label">
                                <text x="447" y="613" fill="#6aa96a">Y</text>
                                <text x="448" y="642" fill="#b5202c">X</text>
                                <text x="422" y="614" fill="#22229a">Z</text>
                            </g>
                            <use href="#i-rotate" x="635" y="465" width="18" height="18" color="#f4f4f4"/>
                        </svg>
                    </div>
                    <div class="doc-tabs">
                        <button><svg><use href="#i-app"/></svg><span>BobCAD1</span></button>
                        <button class="current"><svg><use href="#i-app"/></svg><span>BobCAD Mil...</span></button>
                    </div>
                </section>

                <div class="side-tools">
                    <span class="grip-h"></span>
                    <button aria-label="OK"><svg viewBox="0 0 20 20"><path d="M1 10l4-3 4 4 7-8 3 3-9 12z" fill="#3fbd35" stroke="#1c7a1a"/></svg></button>
                    <button aria-label="Cancel"><svg viewBox="0 0 20 20"><path d="M4 1l6 5 5-4 4 5-5 4 4 5-5 4-5-5-4 4-4-5 4-4-4-4z" fill="#d93648" stroke="#9c1b2b"/></svg></button>
                    <button aria-label="Line types"><svg viewBox="0 0 20 20"><path d="M1 4h18M1 16h18" stroke="#9ba3b8" stroke-width="1.800"/><path d="M1 8h18M1 12h18M1 18.500h18" stroke="#9ba3b8" stroke-width="1.800" stroke-dasharray="3 1"/></svg></button>
                    <button aria-label="Line widths"><svg viewBox="0 0 20 20"><path d="M1 3h18M1 7.500h18M1 12h18M1 16.500h18" stroke="#9ba3b8" stroke-width="2.800"/></svg></button>
                    <button aria-label="Layers"><svg viewBox="0 0 20 20"><path d="M1 7l8-4 4 3 6-2v11l-6 2H5l-4-4z" fill="#a0a1a9"/><path d="M3 10l7-3 3 2h6l-6 5H7z" fill="#e2aa51"/></svg></button>
                    <button aria-label="Snap"><svg viewBox="0 0 20 20"><circle cx="10" cy="10" r="8.500" fill="none" stroke="#9da5ba" stroke-width="1.500"/><circle cx="10" cy="10" r="4" fill="none" stroke="#9da5ba" stroke-width="1.500"/><path d="M10 10h5" stroke="#9da5ba"/></svg></button>
                    <button aria-label="Measure"><svg viewBox="0 0 20 20"><path d="M3 3h14" stroke="#111" stroke-width="2"/><path d="M1 6h18v11H1z" fill="#f5b42f" stroke="#b87510"/><path d="M4 7v5M7 7v7M10 7v5M13 7v7M16 7v5" stroke="#fff1b4"/></svg></button>
                    <button aria-label="Measure angle"><svg viewBox="0 0 20 20"><path d="M1 11l15-6 3 8-14 6z" fill="#f5b42f" stroke="#b87510"/><path d="M5 11l2 3M9 9l2 3M13 8l2 3" stroke="#fff1b4"/><path d="M2 4l4 5M8 1l4 5" stroke="#223" stroke-width="1.500"/></svg></button>
                    <button aria-label="Move to"><svg viewBox="0 0 20 20"><path d="M3 2v16" stroke="#9da5ba" stroke-width="2.500" stroke-dasharray="4 3"/><path d="M6 10h7M10 7l4 3-4 3z" fill="#9da5ba" stroke="#9da5ba"/><path d="M17 2v16" stroke="#e2b251" stroke-width="3"/></svg></button>
                    <button aria-label="Copy to"><svg viewBox="0 0 20 20"><path d="M3 2v16" stroke="#9da5ba" stroke-width="2.500"/><path d="M6 10h7M10 7l4 3-4 3z" fill="#9da5ba" stroke="#9da5ba"/><path d="M17 2v16" stroke="#e2b251" stroke-width="3" stroke-dasharray="4 2"/></svg></button>
                </div>
            </main>

            <footer class="statusbar">
                <p class="hint">For Help, press F1, or in the Help menu, click Help Topics.</p>
                <output class="coord wide">X=54.269</output>
                <output class="coord">Y=-3.529</output>
                <output class="coord">Z=-33.204</output>
                <button class="color-pick" aria-label="Color"><i class="swatch"></i><svg><use href="#i-drop"/></svg></button>
                <label class="line-pick">
                    <select aria-label="Line style"><option></option></select>
                    <svg viewBox="0 0 52 26" aria-hidden="true"><path d="M5 15.500h29" stroke="#14144e" stroke-width="1.500"/><path d="M43 14h6l-3 4z" fill="#111"/></svg>
                </label>
                <span class="units">mm</span>
                <svg class="resize" viewBox="0 0 10 10"><path d="M8 2v7M5 5v4M2 7v2" stroke="#e6eeff" stroke-width="1.500"/></svg>
            </footer>
        </div>
    </div>
</body>
</html>
```

FILE: styles.css
```css
* {
    margin: 0;
    padding: 0;
    box-sizing: border-box;
}

body {
    height: 100vh;
    padding: 0 12.5%;
    overflow: hidden;
    background: #000;
    color: #1c2438;
    font-family: Roboto, "Open Sans", sans-serif;
    font-size: 10px;
}

button {
    border: none;
    background: none;
    color: inherit;
    font: inherit;
}

.sprite {
    position: absolute;
    width: 0;
    height: 0;
}

.window {
    display: flex;
    flex-direction: column;
    height: 100%;
    padding: 0 5px 5px 8px;
    border-radius: 6px 6px 0 0;
    background:
        linear-gradient(#1d3559, #16305a) bottom / 100% 5px no-repeat,
        linear-gradient(#0f1f3d, #57616f 28%, #23282f 40%, #122238) right / 5px 100% no-repeat,
        linear-gradient(90deg, transparent 50%, #b8c6e4 62%, #3a4c78 75%, #a9b9e4) left / 8px 100% no-repeat,
        linear-gradient(#57627f, #1c466b 20%, #1b3a52 45%, #5d6068 58%, #2c4246 75%, #3c4a4d);
}

/* Title bar */
.titlebar {
    display: flex;
    align-items: center;
    gap: 4px;
    height: 24px;
    margin: 0 -5px 0 -8px;
    padding: 0 4px 0 9px;
    border-top: 1px solid #aab4c8;
    border-bottom: 1px solid #5d6f92;
    border-radius: 6px 6px 0 0;
    background:
        linear-gradient(90deg, transparent 22%, #8b86987a 26%, transparent 29%),
        linear-gradient(90deg, #7d8799 0, #a1a9ba 12%, #6e7689 20%, #26406d 33%, #21406d 52%, #2f4973 62%, #142c51 75%, #0e2344);
}

.title-icon {
    width: 12px;
    height: 12px;
}

.title {
    flex: 1;
    color: #10141d;
    font-size: 10px;
    font-weight: 400;
}

.window-controls {
    display: flex;
    align-self: flex-start;
    border: 1px solid #c6cddc;
    border-top: none;
    border-radius: 0 0 4px 4px;
    overflow: hidden;
}

.win-btn {
    display: flex;
    align-items: center;
    justify-content: center;
    width: 22px;
    height: 15px;
    border-right: 1px solid #c6cddc;
    background: linear-gradient(#8c98b3, #4d5c7d 50%, #2d3e62 52%, #61718f);
}

.win-btn.small {
    width: 21px;
}

.win-btn.close {
    width: 38px;
    border-right: none;
    background: linear-gradient(#d99087, #c5493c 50%, #a31f14 52%, #d0614e);
}

.win-btn svg {
    width: 12px;
    height: 10px;
}

.client {
    display: flex;
    flex: 1;
    flex-direction: column;
    min-height: 0;
    background: #a5bcfb;
}

/* Menu */
.menubar {
    display: flex;
    align-items: center;
    height: 22px;
    padding-left: 2px;
}

.menubar > button {
    padding: 0 3px;
    white-space: nowrap;
}

.menu-icon {
    width: 12px;
    height: 12px;
    margin-left: 4px;
}

.mdi-controls {
    display: flex;
    gap: 6px;
    margin-left: auto;
    padding-right: 6px;
}

.mdi-controls svg {
    display: block;
    width: 10px;
    height: 10px;
}

.grip {
    flex: none;
    width: 2px;
    height: 14px;
    background: repeating-linear-gradient(#26314e 0 2px, transparent 2px 4px);
}

/* Toolbars */
.toolbar-row {
    display: flex;
    gap: 2px;
    height: 30px;
    overflow: hidden;
}

.toolbar-row.second {
    height: 29px;
}

.toolbar {
    display: flex;
    flex: none;
    align-items: center;
    gap: 1px;
    padding: 0 5px 0 3px;
    border-radius: 3px;
    background: linear-gradient(#dbe5ff, #c3d3fd 50%, #a4bbf8);
}

.toolbar .grip {
    height: 20px;
}

.tool {
    display: flex;
    flex: none;
    align-items: center;
    justify-content: center;
    width: 24px;
    height: 24px;
}

.tool svg {
    width: 18px;
    height: 18px;
}

.tool.active {
    border: 1px solid #5a8fd6;
    background: #f0f5ff;
    color: #000;
}

.tool.active svg {
    width: 20px;
    height: 20px;
}

.tool.all {
    color: #13264d;
    font-family: "Open Sans", sans-serif;
    font-size: 11px;
    font-weight: 700;
}

.tool.muted {
    opacity: 0.7;
}

.drop {
    display: flex;
    flex: none;
    align-items: center;
    justify-content: center;
    width: 11px;
    height: 24px;
    color: #3f5787;
}

.drop svg {
    width: 8px;
    height: 8px;
}

.drop.muted {
    color: #96a5c8;
}

.sep {
    flex: none;
    width: 1px;
    height: 20px;
    margin: 0 3px 0 2px;
    background: #a9b9e2;
}

/* Workspace */
.workspace {
    display: flex;
    flex: 1;
    min-height: 0;
}

.manager {
    display: flex;
    flex: none;
    flex-direction: column;
    width: 223px;
    padding: 0 3px 2px;
    border-right: 1px solid #6e80b8;
    border-left: 1px solid #dce5ff;
    background: #b8cafc;
}

.manager-head {
    display: flex;
    align-items: center;
    gap: 3px;
    height: 15px;
    padding-left: 1px;
}

.manager-head .grip {
    height: 10px;
}

.manager-head h2 {
    flex: 1;
    font-size: 9px;
    font-weight: 400;
}

.manager-head svg {
    display: block;
    width: 8px;
    height: 8px;
}

.tree-pane {
    display: flex;
    flex: 1;
    flex-direction: column;
    min-height: 0;
    border: 1px solid #8a97bb;
    background: #fdfdff;
}

.tree {
    display: grid;
    grid-auto-rows: 1fr;
    height: 218px;
    border-bottom: 1px solid #9b9ba3;
    color: #333;
    font-size: 9px;
    list-style: none;
}

.tree li {
    display: flex;
    align-items: center;
    min-height: 0;
    white-space: nowrap;
}

.tree span {
    padding: 0 1px;
    line-height: 12px;
}

.tree .selected {
    padding-right: 2px;
    background: #3399ff;
    color: #fff;
}

.ico {
    flex: none;
    width: 14px;
    height: 12px;
    margin-right: 2px;
}

.ico.near {
    margin-right: 1px;
    margin-left: -2px;
}

.guide {
    position: relative;
    display: flex;
    flex: none;
    align-items: center;
    align-self: stretch;
    width: 16px;
}

.guide.line::before,
.guide.tee::before,
.guide.last::before,
.guide.first::before {
    content: "";
    position: absolute;
    top: 0;
    bottom: 0;
    left: 7px;
    border-left: 1px dotted #a5a5a5;
}

.guide.last::before {
    bottom: 50%;
}

.guide.first::before {
    top: 50%;
}

.guide.tee::after,
.guide.last::after,
.guide.first::after {
    content: "";
    position: absolute;
    top: 50%;
    right: 1px;
    left: 8px;
    border-top: 1px dotted #a5a5a5;
}

.expander {
    position: relative;
    z-index: 1;
    width: 8px;
    height: 8px;
    margin-left: 3px;
    border: 1px solid #9a9aa5;
    background: linear-gradient(#44598c, #44598c) center / 4px 1px no-repeat, #fff;
}

.expander.closed {
    background:
        linear-gradient(#44598c, #44598c) center / 4px 1px no-repeat,
        linear-gradient(#44598c, #44598c) center / 1px 4px no-repeat,
        #fff;
}

.scrollbar {
    display: flex;
    align-items: center;
    height: 14px;
    margin-top: auto;
    background: #f0eef4;
}

.scrollbar button {
    width: 15px;
    height: 14px;
}

.scrollbar button:last-child {
    margin-left: auto;
}

.scrollbar svg {
    display: block;
    width: 8px;
    height: 8px;
    margin: 0 auto;
}

.thumb {
    display: flex;
    align-items: center;
    justify-content: center;
    gap: 1px;
    width: 85%;
    height: 12px;
    border: 1px solid #a3a0ac;
    border-radius: 1px;
    background: linear-gradient(#f8f6fa, #dedbe3 50%, #cbc8d2);
}

.thumb i {
    width: 1px;
    height: 5px;
    background: #666;
}

.manager-tabs {
    display: flex;
    height: 22px;
    padding: 0 4px;
    background: linear-gradient(90deg, #b0c4fb, #dbe5ff 70%, #c0d0fc);
}

.manager-tabs button {
    display: flex;
    flex: 1;
    align-items: center;
    justify-content: center;
    gap: 2px;
    height: 18px;
    border-right: 1px solid #a2b2dc;
}

.manager-tabs svg {
    width: 13px;
    height: 13px;
}

.manager-tabs .current {
    border: 1px solid #5f7099;
    border-top: none;
    background: #eaf0ff;
}

.document {
    display: flex;
    flex: 1;
    flex-direction: column;
    min-width: 0;
    margin-left: 5px;
    padding-top: 3px;
    border-left: 1px solid #7083bd;
}

.viewport {
    flex: 1;
    min-height: 0;
    border: 2px solid #eef2ff;
    border-top-color: #67759a;
    background: #000;
}

.scene {
    display: block;
    width: 100%;
    height: 100%;
}

.axis-label {
    font-family: "Liberation Sans", Arial, sans-serif;
    font-size: 8px;
}

.doc-tabs {
    display: flex;
    height: 23px;
    padding: 0 0 2px 1px;
    border-top: 1px solid #7789b8;
    border-bottom: 1px solid #dde6ff;
    background: linear-gradient(90deg, #b0c4fc, #dfe7ff 45%, #a5bcfb);
}

.doc-tabs button {
    display: flex;
    align-items: center;
    gap: 8px;
    padding: 0 6px 0 3px;
    white-space: nowrap;
}

.doc-tabs .current {
    gap: 2px;
    padding: 0 1px;
    border: 1px solid #6a7ba8;
    border-top: none;
    background: #d5e0ff;
}

.doc-tabs svg {
    width: 12px;
    height: 12px;
}

.side-tools {
    display: flex;
    flex: none;
    flex-direction: column;
    align-items: center;
    align-self: flex-start;
    width: 28px;
    margin: 0 3px;
    padding: 3px 0 5px;
    border-radius: 4px;
    background: linear-gradient(90deg, #dee7ff, #a8bef8);
}

.grip-h {
    width: 22px;
    height: 2px;
    margin-bottom: 3px;
    background: repeating-linear-gradient(90deg, #26314e 0 2px, transparent 2px 3px);
}

.side-tools button {
    display: flex;
    align-items: center;
    justify-content: center;
    width: 24px;
    height: 23px;
}

.side-tools svg {
    width: 18px;
    height: 18px;
}

/* Status bar */
.statusbar {
    display: flex;
    align-items: center;
    height: 32px;
    padding: 0 2px;
    color: #111a30;
    font-family: "Liberation Sans", Arial, sans-serif;
    font-size: 11px;
    font-weight: 700;
}

.hint {
    flex: 1;
    white-space: nowrap;
}

.coord {
    width: 70px;
    height: 24px;
    padding-left: 3px;
    border-right: 1px solid #c9d7fd;
    line-height: 24px;
}

.coord.wide {
    width: 71px;
}

.color-pick {
    display: flex;
    align-items: center;
    justify-content: space-between;
    width: 51px;
    height: 26px;
    margin: 0 2px 0 4px;
    padding: 2px 0 2px 3px;
    border: 1px solid #9aa1b5;
    border-radius: 3px;
    background: #eceaf2;
}

.color-pick svg {
    width: 6px;
    height: 6px;
    margin-right: 1px;
}

.swatch {
    width: 36px;
    height: 19px;
    border: 1px solid #11331a;
    background: #009a00;
}

.line-pick {
    display: grid;
    width: 52px;
    height: 26px;
    background: #fff;
}

.line-pick > * {
    grid-area: 1 / 1;
    width: 52px;
    height: 26px;
}

.line-pick select {
    appearance: none;
    border: none;
    background: #fff;
}

.line-pick svg {
    pointer-events: none;
}

.units {
    width: 55px;
    padding-left: 4px;
    border-right: 1px solid #c9d7fd;
    line-height: 24px;
}

.resize {
    width: 10px;
    height: 10px;
    margin: 14px 1px 0 2px;
}
```
